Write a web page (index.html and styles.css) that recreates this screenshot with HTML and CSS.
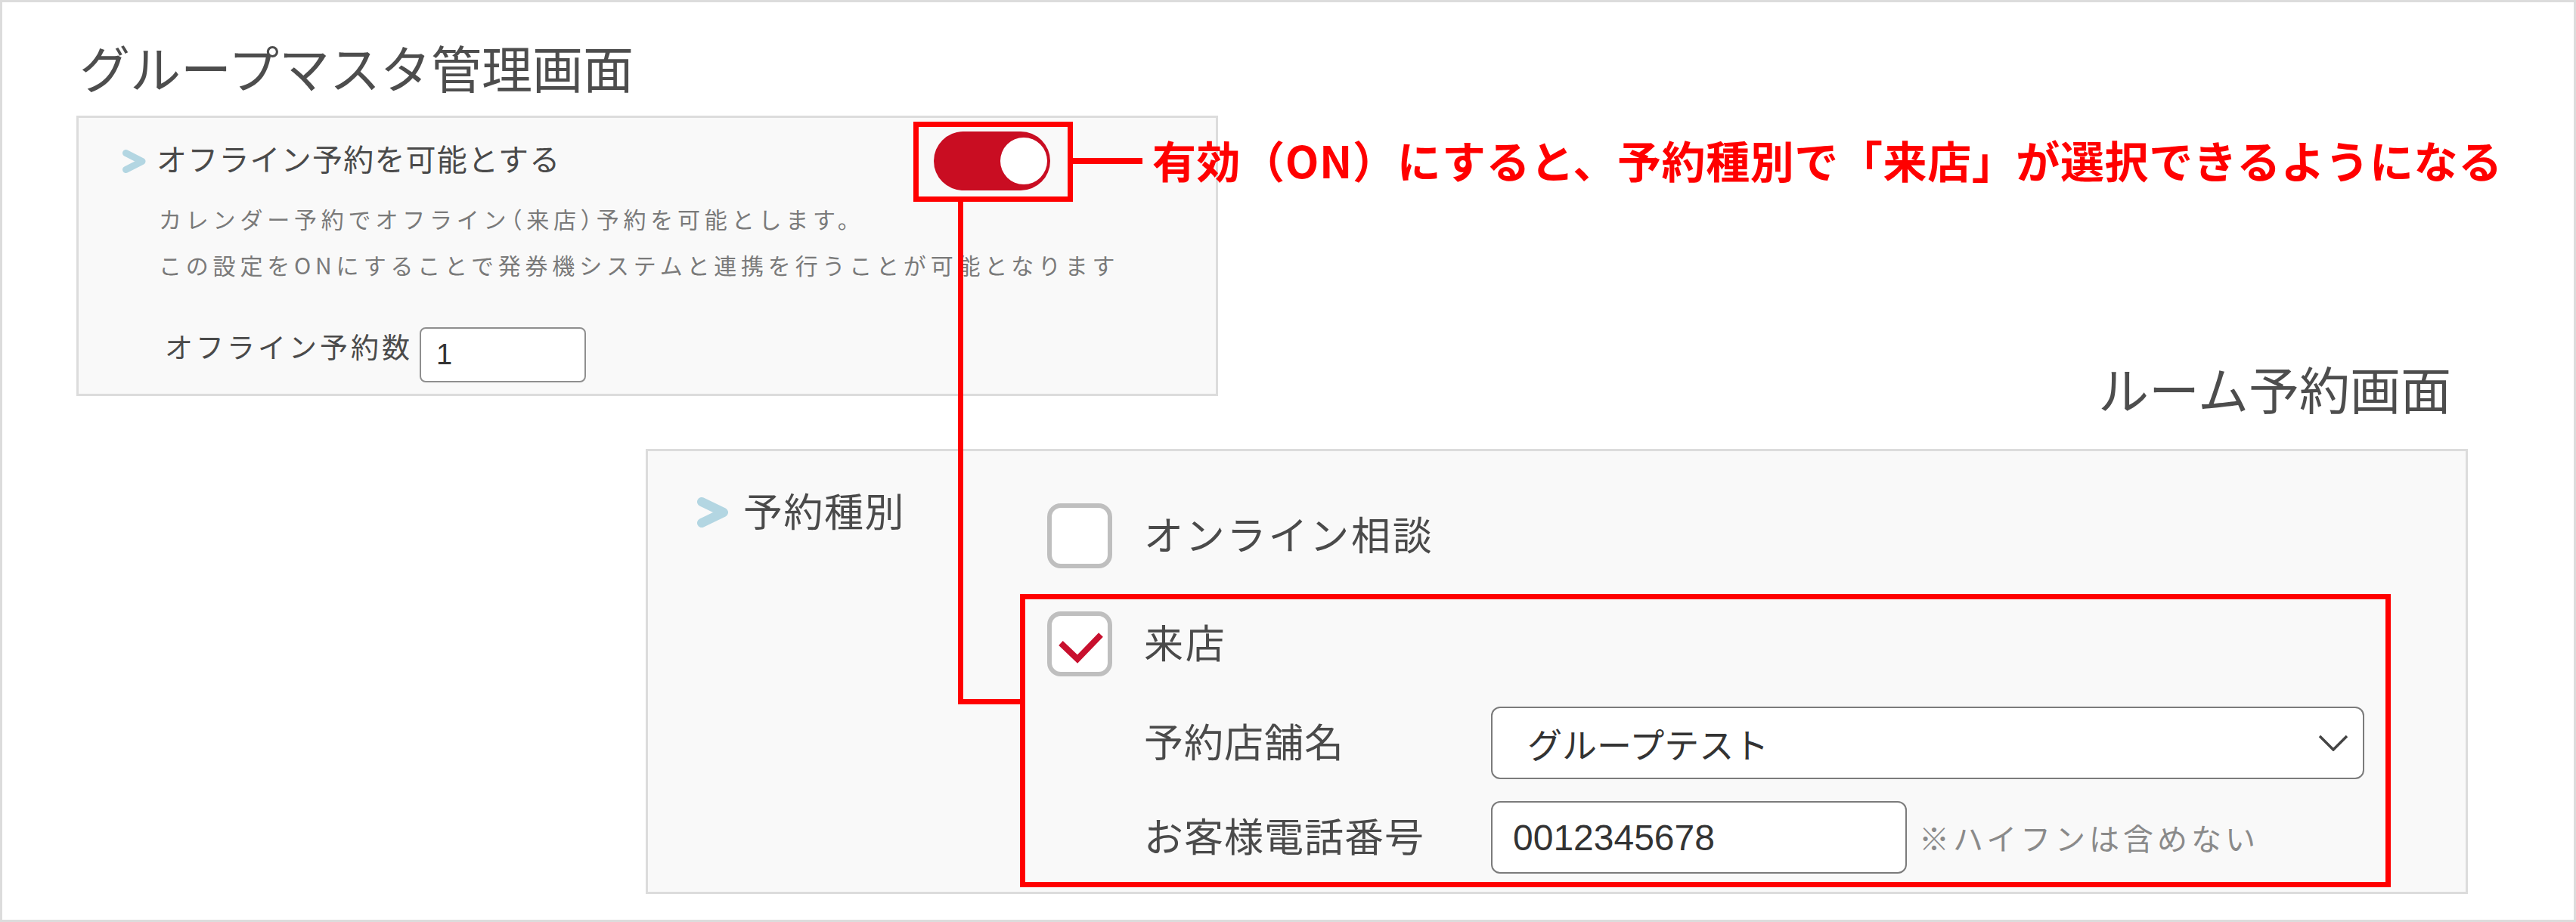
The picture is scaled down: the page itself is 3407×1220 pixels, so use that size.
FILE: index.html
```html
<!DOCTYPE html>
<html lang="ja">
<head>
<meta charset="utf-8">
<title>オフライン予約設定</title>
<link rel="stylesheet" href="styles.css">
</head>
<body>
<div class="frame">
  <section class="group group-master">
    <h1 class="screen-title">グループマスタ管理画面</h1>
    <div class="panel panel-master">
      <div class="setting-head">
        <svg class="chev chev-sm" viewBox="0 0 31 31" width="31" height="31"><polyline points="4.5,4.5 26,15.5 4.5,26.5"/></svg>
        <span class="setting-title">オフライン予約を可能とする</span>
        <div class="toggle-wrap">
          <span class="toggle"><span class="knob"></span></span>
          <span class="callout-box"></span>
          <span class="callout-line"></span>
          <span class="callout-text">有効（ON）にすると、予約種別で「来店」が選択できるようになる</span>
        </div>
      </div>
      <p class="setting-desc">カレンダー予約でオフライン<span class="paren">（</span>来店<span class="paren">）</span>予約を可能とします。<br>この設定をONにすることで発券機システムと連携を行うことが可能となります</p>
      <div class="count-row">
        <span class="count-label">オフライン予約数</span>
        <span class="count-input">1</span>
      </div>
    </div>
  </section>

  <section class="group group-room">
    <h2 class="screen-title title-right">ルーム予約画面</h2>
    <div class="panel panel-room">
      <div class="field-label">
        <svg class="chev chev-lg" viewBox="0 0 41 40" width="41" height="40"><polyline points="6,6 35,20 6,34"/></svg>
        <span class="field-text">予約種別</span>
      </div>
      <div class="options">
        <div class="option">
          <svg class="checkbox" viewBox="0 0 86 86" width="86" height="86"><rect x="3" y="3" width="80" height="80" rx="15" ry="15"/></svg>
          <span class="option-text">オンライン相談</span>
        </div>
        <div class="highlight">
          <div class="option">
            <svg class="checkbox" viewBox="0 0 86 86" width="86" height="86"><rect x="3" y="3" width="80" height="80" rx="15" ry="15"/><polyline class="tick" points="18,42 40,63 71,31"/></svg>
            <span class="option-text">来店</span>
          </div>
          <div class="sub-row sub-row-first">
            <span class="sub-label">予約店舗名</span>
            <div class="select-box">
              <span>グループテスト</span>
              <svg class="select-arrow" viewBox="0 0 40 22" width="40" height="22"><polyline points="2,2 20,20 38,2"/></svg>
            </div>
          </div>
          <div class="sub-row">
            <span class="sub-label">お客様電話番号</span>
            <div class="text-input">0012345678</div>
            <span class="note">※ハイフンは含めない</span>
          </div>
        </div>
      </div>
    </div>
  </section>

  <div class="connector"></div>
</div>
</body>
</html>
```

FILE: styles.css
```css
* {
  box-sizing: border-box;
}

html,
body {
  margin: 0;
  padding: 0;
  background: #ffffff;
}

body {
  font-family: "Noto Sans CJK JP", "Noto Sans", sans-serif;
  color: #4a4a4a;
}

.frame {
  position: relative;
  width: 3407px;
  height: 1220px;
  border: 3px solid #dcdcdc;
  padding-top: 51px;
  overflow: hidden;
}

.screen-title {
  margin: 0;
  font-size: 67px;
  line-height: 1;
  font-weight: 400;
  color: #4d4d4d;
  white-space: nowrap;
}

.panel {
  background: #f9f9f9;
  border: 3px solid #dcdcdc;
}

/* ---------- group master ---------- */
.group-master {
  margin-left: 98px;
  width: 1510px;
}

.group-master .screen-title {
  margin-left: 4px;
}

.panel-master {
  margin-top: 32px;
  padding: 18px 219px 15px 58px;
}

.setting-head {
  display: flex;
  align-items: center;
  height: 78px;
}

.chev polyline {
  fill: none;
  stroke: #b3d6e2;
  stroke-linecap: round;
  stroke-linejoin: round;
}

.chev-sm polyline {
  stroke-width: 9;
}

.chev-lg polyline {
  stroke-width: 12;
}

.chev {
  flex: none;
}

.setting-title {
  margin-left: 14px;
  margin-bottom: 8px;
  font-size: 40px;
  line-height: 1;
  letter-spacing: 1.2px;
  color: #4a4a4a;
  white-space: nowrap;
}

.toggle-wrap {
  position: relative;
  margin-left: auto;
  width: 154px;
  height: 78px;
  flex: none;
}

.toggle {
  display: flex;
  align-items: center;
  justify-content: flex-end;
  width: 154px;
  height: 78px;
  padding-right: 4px;
  border-radius: 39px;
  background: #c90d22;
}

.knob {
  display: block;
  width: 62px;
  height: 62px;
  border-radius: 50%;
  background: #ffffff;
}

.callout-box {
  position: absolute;
  left: -27px;
  top: -13px;
  width: 211px;
  height: 106px;
  border: 7px solid #ff0000;
}

.callout-line {
  position: absolute;
  left: 184px;
  top: 35px;
  width: 92px;
  height: 8px;
  background: #ff0000;
}

.callout-text {
  position: absolute;
  left: 289px;
  top: 8px;
  font-size: 58px;
  line-height: 1;
  font-weight: 700;
  letter-spacing: 0.6px;
  color: #ff0000;
  white-space: nowrap;
}

.setting-desc {
  margin: 7px 0 0 48px;
  font-size: 30px;
  line-height: 61px;
  letter-spacing: 5.8px;
  color: #7a7a7a;
  white-space: nowrap;
}

.paren {
  font-feature-settings: "halt";
}

.count-row {
  display: flex;
  align-items: center;
  margin-top: 52px;
  padding-left: 56px;
}

.count-label {
  margin-bottom: 22px;
  font-size: 37px;
  line-height: 1;
  letter-spacing: 4px;
  color: #4a4a4a;
  white-space: nowrap;
}

.count-input {
  display: flex;
  align-items: center;
  width: 220px;
  height: 73px;
  margin-left: 9px;
  padding-left: 20px;
  border: 2px solid #8f8f8f;
  border-radius: 8px;
  background: #ffffff;
  font-family: "Liberation Sans", Arial, sans-serif;
  font-size: 38px;
  color: #333333;
}

/* ---------- group room ---------- */
.group-room {
  position: relative;
  margin-top: -45px;
  margin-left: 851px;
  width: 2410px;
}

.title-right {
  text-align: right;
  padding-right: 22px;
}

.panel-room {
  display: grid;
  grid-template-columns: 463px 1fr;
  align-items: start;
  margin-top: 48px;
  padding: 52px 0 6px 65px;
}

.field-label {
  display: flex;
  align-items: center;
  gap: 20px;
  height: 58px;
}

.field-text {
  margin-bottom: 6px;
  font-size: 52px;
  line-height: 1;
  letter-spacing: 1.5px;
  white-space: nowrap;
}

.options {
  margin-top: 17px;
}

.option {
  display: flex;
  align-items: center;
  gap: 42px;
}

.checkbox {
  flex: none;
}

.checkbox rect {
  fill: #ffffff;
  stroke: #bfbfbf;
  stroke-width: 6;
}

.checkbox .tick {
  fill: none;
  stroke: #c8102e;
  stroke-width: 8;
  stroke-linejoin: miter;
}

.option-text {
  margin-bottom: 6px;
  font-size: 52px;
  line-height: 1;
  letter-spacing: 2.8px;
  white-space: nowrap;
}

.highlight {
  width: 1813px;
  margin-top: 34px;
  margin-left: -36px;
  padding: 16px 0 11px 29px;
  border: 7px solid #ff0000;
}

.sub-row {
  display: flex;
  align-items: center;
  margin-top: 29px;
  padding-left: 128px;
}

.sub-row-first {
  margin-top: 40px;
}

.sub-label {
  width: 459px;
  flex: none;
  margin-bottom: 6px;
  font-size: 52px;
  line-height: 1;
  letter-spacing: 1px;
  white-space: nowrap;
}

.select-box {
  display: flex;
  align-items: center;
  justify-content: space-between;
  width: 1155px;
  height: 96px;
  padding: 0 19px 0 46px;
  border: 2px solid #7b7b7b;
  border-radius: 12px;
  background: #ffffff;
  font-size: 46px;
  color: #333333;
}

.select-arrow polyline {
  fill: none;
  stroke: #444444;
  stroke-width: 3.5;
}

.text-input {
  display: flex;
  align-items: center;
  width: 550px;
  height: 96px;
  padding-left: 27px;
  border: 2px solid #7b7b7b;
  border-radius: 12px;
  background: #ffffff;
  font-family: "Liberation Sans", Arial, sans-serif;
  font-size: 48px;
  color: #333333;
}

.note {
  margin-left: 16px;
  font-size: 40px;
  line-height: 1;
  letter-spacing: 5px;
  color: #8a8a8a;
  white-space: nowrap;
}

/* ---------- connector annotation ---------- */
.connector {
  position: absolute;
  left: 1264px;
  top: 264px;
  width: 84px;
  height: 665px;
  border-left: 7px solid #ff0000;
  border-bottom: 7px solid #ff0000;
  z-index: 5;
}
```
